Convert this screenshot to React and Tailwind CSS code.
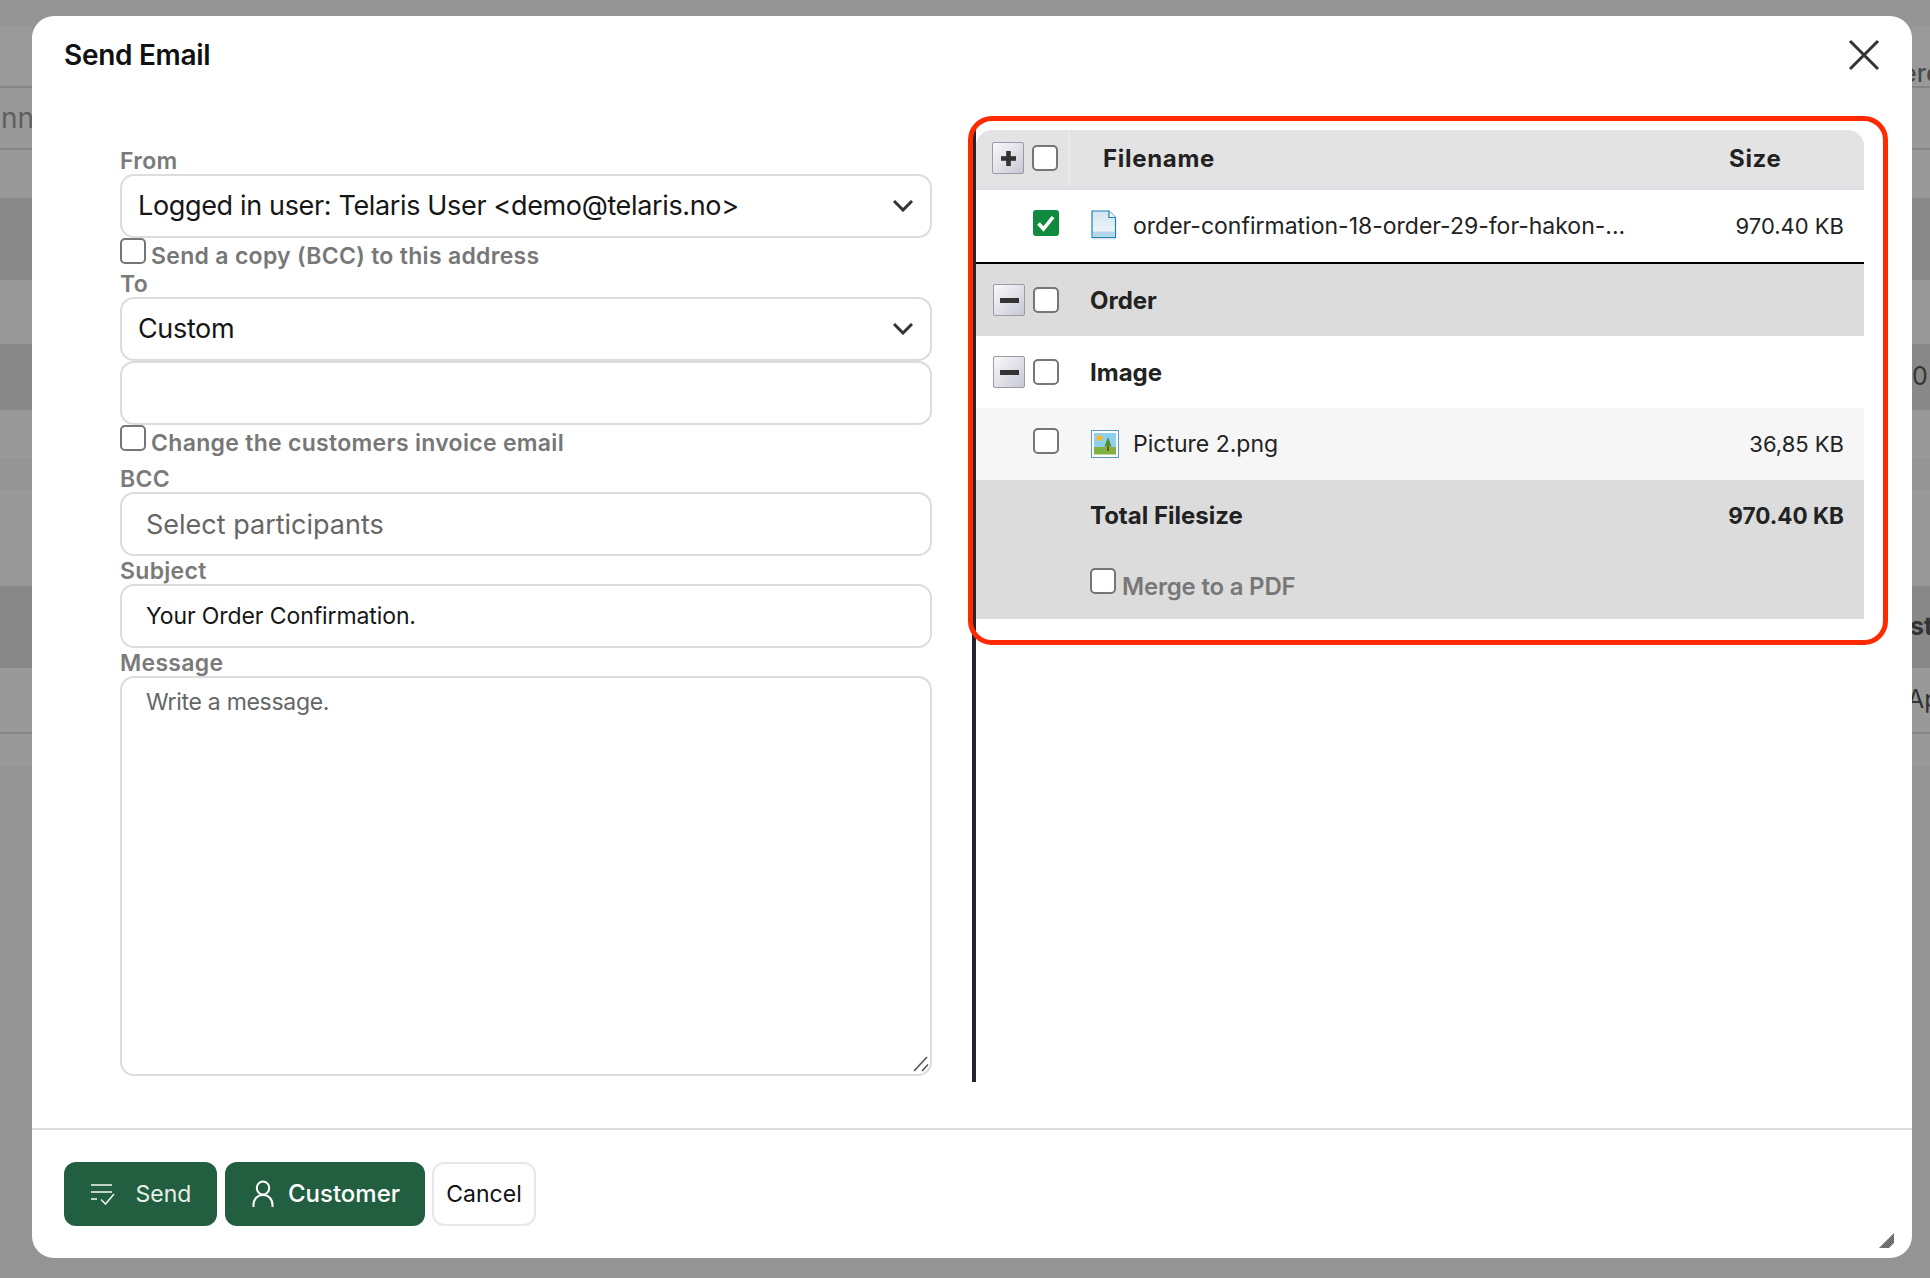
import React from "react";

const Checkbox = ({ className = "" }) => (
  <span
    className={`block w-[26px] h-[26px] shrink-0 rounded-[5px] border-2 border-[#767676] bg-white ${className}`}
  />
);

const CheckedBox = () => (
  <span className="mb-[6px] flex w-[26px] h-[26px] shrink-0 items-center justify-center rounded-[3px] bg-[#0f8a3f]">
    <svg width="20" height="18" viewBox="0 0 20 18" fill="none">
      <path d="M2.5 9.5L7.5 15L17 3" stroke="#fff" strokeWidth="3.6" />
    </svg>
  </span>
);

const TreeButton = ({ plus }) => (
  <span className="flex w-[32px] h-[32px] shrink-0 items-center justify-center rounded-[2px] border border-[#9a9aa8] bg-gradient-to-br from-[#fafafa] to-[#c8c8d6]">
    {plus ? (
      <svg width="15" height="15" viewBox="0 0 15 15">
        <rect x="0" y="5.2" width="15" height="4.6" fill="#333" />
        <rect x="5.2" y="0" width="4.6" height="15" fill="#333" />
      </svg>
    ) : (
      <svg width="19" height="5" viewBox="0 0 19 5">
        <rect width="19" height="5" fill="#333" />
      </svg>
    )}
  </span>
);

const FileIcon = () => (
  <svg width="26" height="30" viewBox="0 0 26 30" className="ml-[1px] mb-[3px] shrink-0">
    <defs>
      <linearGradient id="doc" x1="0" y1="0" x2="0" y2="1">
        <stop offset="0" stopColor="#d4e4ef" />
        <stop offset="1" stopColor="#f4f9fb" />
      </linearGradient>
    </defs>
    <path d="M1 1H18L24.5 7.5V27.5H1Z" fill="url(#doc)" stroke="#1c82bd" strokeWidth="1.2" />
    <rect x="2" y="21.5" width="21.8" height="5.4" fill="#b3d7e8" />
    <path d="M18 1V7.5H24.5" fill="#fff" stroke="#1c82bd" strokeWidth="1.2" />
    <rect x="1" y="28" width="24" height="1.5" fill="#dfe3e6" />
  </svg>
);

const ImageIcon = () => (
  <svg width="28" height="28" viewBox="0 0 28 28" className="ml-[1px] mb-[2px] shrink-0">
    <rect x="0.5" y="0.5" width="27" height="27" fill="#fff" stroke="#5a9acb" />
    <rect x="3" y="3" width="22" height="15" fill="#8fd0ee" />
    <rect x="3" y="17" width="22" height="7.5" fill="#7fb23e" />
    <circle cx="8.5" cy="8" r="3" fill="#f5b92e" />
    <rect x="16" y="16" width="2" height="5" fill="#8a4b20" />
    <path d="M17 7L20.5 16.5H13.5Z" fill="#4f8f2e" />
  </svg>
);

const SendIcon = () => (
  <svg width="26" height="24" viewBox="0 0 26 24" fill="none" stroke="#e6efe9" strokeWidth="1.6">
    <path d="M1 3H22" />
    <path d="M1 10H22" />
    <path d="M1 17H7" />
    <path d="M11 17.5L15.5 22L24 12" />
  </svg>
);

const UserIcon = () => (
  <svg width="22" height="28" viewBox="0 0 22 28" fill="none" stroke="#fff" strokeWidth="2">
    <ellipse cx="11" cy="8" rx="6.2" ry="6.5" />
    <path d="M1.5 27V25C1.5 19 5.5 15 11 15C16.5 15 20.5 19 20.5 25V27" />
  </svg>
);

const FieldLabel = ({ children }) => (
  <div className="h-[26px] shrink-0 text-[23px] leading-[26px] font-semibold tracking-[0.3px] text-[#7a7a7a]">
    {children}
  </div>
);

const CheckLine = ({ children, className = "" }) => (
  <div className={`flex shrink-0 items-start gap-[5px] ${className}`}>
    <Checkbox />
    <span className="pt-[5px] text-[23px] leading-[26px] font-semibold tracking-[0.3px] text-[#777]">
      {children}
    </span>
  </div>
);

const SelectBox = ({ children }) => (
  <div className="flex h-[64px] shrink-0 items-center justify-between rounded-[14px] border-2 border-[#dcdcdc] bg-white pl-[16px] pr-[17px] text-[27px] tracking-[-0.35px] text-[#161616]">
    <span className="pt-[1px]">{children}</span>
    <svg width="20" height="12" viewBox="0 0 20 12" fill="none" stroke="#333" strokeWidth="3">
      <path d="M1 1L10 10L19 1" />
    </svg>
  </div>
);

const Stripes = ({ side }) => {
  const align = side === "left" ? "justify-end" : "justify-start";
  const text = {
    top: side === "right" ? "ere" : "",
    second: side === "left" ? "nn" : "",
    zero: side === "right" ? "0" : "",
    st: side === "right" ? "st" : "",
    ap: side === "right" ? "Ap" : "",
  };
  return (
    <div className="flex flex-col overflow-hidden w-full h-full text-[25px] text-[#333] whitespace-nowrap">
      <div className="h-[26px] shrink-0 bg-[#939493]" />
      <div className={`flex h-[62px] shrink-0 items-end border-b-2 border-[#858585] bg-[#9a9a9a] ${align}`}>
        <span className="-ml-[10px] font-medium leading-[26px] text-[#4a4a4a]">{text.top}</span>
      </div>
      <div className={`flex h-[62px] shrink-0 items-center border-b-2 border-[#858585] bg-[#999] ${align}`}>
        <span className="-mr-[2px] text-[28px] text-[#5f5f5f]">{text.second}</span>
      </div>
      <div className="h-[48px] shrink-0 bg-[#999]" />
      <div className="h-[82px] shrink-0 bg-[#898989]" />
      <div className="h-[64px] shrink-0 bg-[#999]" />
      <div className={`flex h-[66px] shrink-0 items-center bg-[#888] ${align}`}>{text.zero}</div>
      <div className="h-[48px] shrink-0 bg-[#999]" />
      <div className="h-[32px] shrink-0 bg-[#949594]" />
      <div className="h-[96px] shrink-0 bg-[#999]" />
      <div className={`flex h-[82px] shrink-0 items-center bg-[#888] font-bold ${align}`}>
        <span className="-ml-[2px]">{text.st}</span>
      </div>
      <div className={`flex h-[66px] shrink-0 items-center border-b-2 border-[#858585] bg-[#999] ${align}`}>
        <span className="-ml-[5px]">{text.ap}</span>
      </div>
      <div className="h-[32px] shrink-0 bg-[#999]" />
      <div className="flex-1 bg-[#939493]" />
    </div>
  );
};

const FileRow = ({ bg, left, children, right, className = "" }) => (
  <div className={`flex h-[72px] items-center pr-[20px] ${bg} ${className}`}>
    <div className="flex w-[114px] shrink-0 items-center pl-[17px] gap-[8px]">{left}</div>
    <div className="flex flex-1 items-center pt-[1px] text-[#222]">{children}</div>
    <div className="pt-[1px] text-[22px] text-[#222]">{right}</div>
  </div>
);

export default function App() {
  return (
    <div className="flex w-[1930px] h-[1278px] overflow-hidden bg-[#939493] font-[Inter,sans-serif]">
      <div className="w-[32px] shrink-0 h-full">
        <Stripes side="left" />
      </div>

      <div className="relative mt-[16px] flex h-[1242px] w-[1880px] shrink-0 flex-col rounded-[22px] bg-white">
        <div className="flex h-[114px] shrink-0 items-start justify-between pl-[32px] pr-[32px]">
          <h2 className="pt-[23px] text-[28px] leading-[32px] font-semibold tracking-[-0.3px] text-[#111]">
            Send Email
          </h2>
          <svg width="32" height="32" viewBox="0 0 32 32" className="mt-[23px]" fill="none" stroke="#333" strokeWidth="3">
            <path d="M2 2L30 30" />
            <path d="M30 2L2 30" />
          </svg>
        </div>

        <div className="flex h-[1000px] shrink-0 border-b-2 border-[#dedede]">
          <div className="ml-[88px] flex h-[947px] w-[812px] shrink-0 flex-col pt-[18px]">
            <FieldLabel>From</FieldLabel>
            <SelectBox>Logged in user: Telaris User &lt;demo@telaris.no&gt;</SelectBox>
            <CheckLine className="h-[33px]">Send a copy (BCC) to this address</CheckLine>
            <FieldLabel>To</FieldLabel>
            <SelectBox>Custom</SelectBox>
            <input className="h-[64px] shrink-0 rounded-[14px] border-2 border-[#dcdcdc] outline-none" />
            <CheckLine className="h-[34px]">Change the customers invoice email</CheckLine>
            <div className="h-[7px] shrink-0" />
            <FieldLabel>BCC</FieldLabel>
            <input
              placeholder="Select participants"
              className="h-[64px] shrink-0 rounded-[14px] border-2 border-[#dcdcdc] px-[24px] text-[27px] outline-none placeholder:text-[#666]"
            />
            <div className="h-[2px] shrink-0" />
            <FieldLabel>Subject</FieldLabel>
            <input
              defaultValue="Your Order Confirmation."
              className="h-[64px] shrink-0 rounded-[14px] border-2 border-[#dcdcdc] px-[24px] text-[23px] tracking-[-0.1px] text-[#161616] outline-none"
            />
            <div className="h-[2px] shrink-0" />
            <FieldLabel>Message</FieldLabel>
            <div className="relative h-[400px] shrink-0">
              <textarea
                placeholder="Write a message."
                className="h-full w-full resize-none rounded-[14px] border-2 border-[#dcdcdc] px-[24px] py-[10px] text-[23px] leading-[28px] tracking-[-0.3px] outline-none placeholder:text-[#666]"
              />
              {/* textarea grip */}
              <svg width="16" height="16" viewBox="0 0 16 16" className="absolute bottom-[4px] right-[3px]" fill="none" stroke="#555" strokeWidth="1.6">
                <path d="M1 15L14 1" />
                <path d="M9 15L15 8.5" />
              </svg>
            </div>
          </div>

          <div className="ml-[40px] h-[952px] w-[892px] shrink-0 border-l-4 border-[#22252b]">
            <div className="flex h-[60px] rounded-t-[16px] border-b-4 border-[#dfe1e6] bg-[#e3e3e3] pr-[20px]">
              <div className="flex w-[94px] shrink-0 items-center gap-[8px] border-r-2 border-[#e9e9ec] pl-[16px]">
                <TreeButton plus />
                <Checkbox />
              </div>
              <div className="flex flex-1 items-center pl-[33px] pt-[2px] text-[24px] font-bold tracking-[0.7px] text-[#222]">
                Filename
              </div>
              <div className="flex w-[115px] items-center pt-[2px] text-[24px] font-bold tracking-[0.7px] text-[#222]">
                Size
              </div>
            </div>

            <FileRow
              bg="bg-white"
              className="border-b-2 border-black !h-[74px]"
              left={
                <>
                  <span className="w-[32px]" />
                  <CheckedBox />
                </>
              }
              right="970.40 KB"
            >
              <FileIcon />
              <span className="ml-[16px] text-[23px]">order-confirmation-18-order-29-for-hakon-...</span>
            </FileRow>

            <FileRow
              bg="bg-[#dcdcdc]"
              left={
                <>
                  <TreeButton />
                  <Checkbox />
                </>
              }
            >
              <span className="text-[24px] font-bold">Order</span>
            </FileRow>

            <FileRow
              bg="bg-white"
              left={
                <>
                  <TreeButton />
                  <Checkbox />
                </>
              }
            >
              <span className="text-[24px] font-bold">Image</span>
            </FileRow>

            <FileRow
              bg="bg-[#f6f6f6]"
              left={
                <>
                  <span className="w-[32px]" />
                  <Checkbox className="mb-[6px]" />
                </>
              }
              right="36,85 KB"
            >
              <ImageIcon />
              <span className="ml-[14px] text-[23px]">Picture 2.png</span>
            </FileRow>

            <div className="h-[139px] bg-[#dcdcdc] pl-[114px] pr-[20px] pt-[22px] font-bold text-[#222]">
              <div className="flex items-center justify-between leading-[27px]">
                <span className="text-[24px]">Total Filesize</span>
                <span className="text-[22.5px]">970.40 KB</span>
              </div>
              <div className="mt-[39px] flex items-start gap-[6px]">
                <Checkbox />
                <span className="pt-[5px] text-[24px] leading-[27px] font-semibold tracking-[-0.2px] text-[#777]">
                  Merge to a PDF
                </span>
              </div>
            </div>
          </div>
        </div>

        <div className="flex flex-1 items-start pl-[32px] pt-[32px]">
          <button className="flex h-[64px] w-[153px] items-center justify-center gap-[20px] rounded-[12px] bg-[#225f40] text-[23px] text-[#e6efe9]">
            <SendIcon />
            Send
          </button>
          <button className="ml-[8px] flex h-[64px] w-[200px] items-center justify-center gap-[14px] rounded-[12px] bg-[#225f40] pl-[2px] text-[24px] font-medium text-white">
            <UserIcon />
            Customer
          </button>
          <button className="ml-[7px] h-[64px] w-[104px] rounded-[12px] border-2 border-[#e6e7ec] text-[23px] text-[#111]">
            Cancel
          </button>
        </div>

        {/* resize grip */}
        <svg width="16" height="16" viewBox="0 0 16 16" className="absolute bottom-[9px] right-[17px]">
          <defs>
            <pattern id="dither" width="2" height="2" patternUnits="userSpaceOnUse">
              <rect width="2" height="2" fill="#8a8a8a" />
              <rect width="1" height="1" fill="#555" />
              <rect x="1" y="1" width="1" height="1" fill="#555" />
            </pattern>
          </defs>
          <path d="M0 15L15 0V10L10 15Z" fill="url(#dither)" />
        </svg>

        {/* red highlight drawn over the file table */}
        <div className="pointer-events-none absolute left-[936px] top-[100px] h-[529px] w-[920px] rounded-[24px] border-[5px] border-[#ff2a00]" />
      </div>

      <div className="w-[18px] shrink-0 h-full">
        <Stripes side="right" />
      </div>
    </div>
  );
}
